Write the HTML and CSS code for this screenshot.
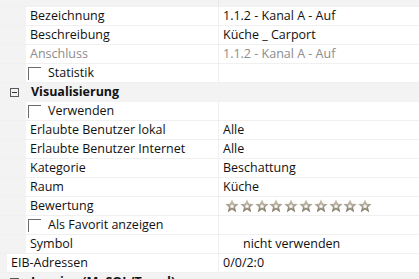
FILE: index.html
```html
<!DOCTYPE html>
<html lang="de">
<head>
  <meta charset="UTF-8">
  <title>Eigenschaften</title>
  <link rel="stylesheet" href="styles.css">
</head>
<body>

  <div class="grid">
    <div class="row cut"><span class="name top-name">g</span><span class="val"></span></div>

    <div class="row"><span class="name sub">Bezeichnung</span><span class="val">1.1.2 - Kanal A - Auf</span></div>
    <div class="row"><span class="name sub">Beschreibung</span><span class="val">Küche _ Carport</span></div>
    <div class="row off"><span class="name sub">Anschluss</span><span class="val">1.1.2 - Kanal A - Auf</span></div>
    <div class="row"><span class="name sub"><i class="check"></i>Statistik</span><span class="val"></span></div>

    <div class="row cat"><i class="exp"></i><span class="cat-name">Visualisierung</span></div>

    <div class="row"><span class="name sub"><i class="check"></i>Verwenden</span><span class="val"></span></div>
    <div class="row"><span class="name sub">Erlaubte Benutzer lokal</span><span class="val">Alle</span></div>
    <div class="row"><span class="name sub">Erlaubte Benutzer Internet</span><span class="val">Alle</span></div>
    <div class="row"><span class="name sub">Kategorie</span><span class="val">Beschattung</span></div>
    <div class="row"><span class="name sub">Raum</span><span class="val">Küche</span></div>
    <div class="row"><span class="name sub">Bewertung</span><span class="val stars" id="stars"></span></div>
    <div class="row"><span class="name sub"><i class="check"></i>Als Favorit anzeigen</span><span class="val"></span></div>
    <div class="row"><span class="name sub">Symbol</span><span class="val symbol">nicht verwenden</span></div>
    <div class="row"><span class="name root">EIB-Adressen</span><span class="val">0/0/2:0</span></div>

    <div class="row cat"><i class="exp"></i><span class="cat-name">Logging (MySQL/Trend)</span></div>
  </div>

  <script>
    // 10 leere Sterne fuer die Bewertung
    const stars = document.getElementById('stars');
    const star = '<svg width="14" height="14" viewBox="0 0 13 13">' +
      '<defs><linearGradient id="sg" x1="0" y1="0" x2="0" y2="1">' +
      '<stop offset="0" stop-color="#cfc9b8"/><stop offset="1" stop-color="#7d7564"/></linearGradient></defs>' +
      '<polygon points="6.5,0.3 8.3,4.5 12.7,4.7 9.3,7.6 10.4,12.2 6.5,9.7 2.6,12.2 3.7,7.6 0.3,4.7 4.7,4.5" fill="url(#sg)"/>' +
      '<polygon points="6.5,4.2 7.2,6 9,6.1 7.7,7.2 8.1,8.9 6.5,8 4.9,8.9 5.3,7.2 4,6.1 5.8,6" fill="#fbfaf6"/>' +
      '</svg>';
    stars.innerHTML = star.repeat(10);
  </script>

</body>
</html>
```

FILE: styles.css
```css
body {
  margin: 0;
  background-color: #f3f3f3;
  font-family: 'Open Sans', 'Noto Sans', sans-serif;
  font-size: 12.5px;
  color: #111;
  overflow: hidden;
}

.grid {
  margin-top: -12px;
}

.row {
  display: flex;
  height: 18px;
  border-bottom: 1px solid #f0f0f0;
  line-height: 18px;
  white-space: nowrap;
}

.name {
  display: flex;
  align-items: center;
  width: 219px;
  box-sizing: border-box;
  background: white;
  border-right: 1px solid #f0f0f0;
  overflow: hidden;
}

.name.sub {
  margin-left: 26px;
  width: 193px;
  padding-left: 4px;
}

.name.root {
  margin-left: 7px;
  width: 212px;
  padding-left: 4px;
}

.val {
  flex: 1;
  display: flex;
  align-items: center;
  background: white;
  padding-left: 4px;
}

.cut .name,
.cut .val {
  background: #f3f3f3;
}

.cut .name {
  border-right-color: #e6e6e6;
  padding-left: 3px;
  align-items: flex-start;
  line-height: 4px;
}

.off {
  color: #8c8c8c;
}

.check {
  display: inline-block;
  width: 13px;
  height: 13px;
  box-sizing: border-box;
  border-top: 1px solid #6b6b6b;
  border-left: 1px solid #6b6b6b;
  margin: 0 7px 0 -2px;
}

.cat {
  background: #f3f3f3;
  border-bottom-color: #f3f3f3;
  align-items: center;
}

.exp {
  position: relative;
  display: inline-block;
  width: 9px;
  height: 9px;
  box-sizing: border-box;
  border: 1px solid #5a5a5a;
  margin-left: 10px;
  margin-right: 12px;
}

.exp::after {
  content: '';
  position: absolute;
  left: 1px;
  top: 3px;
  width: 5px;
  height: 1px;
  background: #333;
}

.cat-name {
  font-weight: bold;
  color: #111;
}

.stars {
  gap: 0.8px;
  padding-left: 6px;
}

.stars svg {
  display: block;
}

.symbol {
  padding-left: 24px;
}
```
